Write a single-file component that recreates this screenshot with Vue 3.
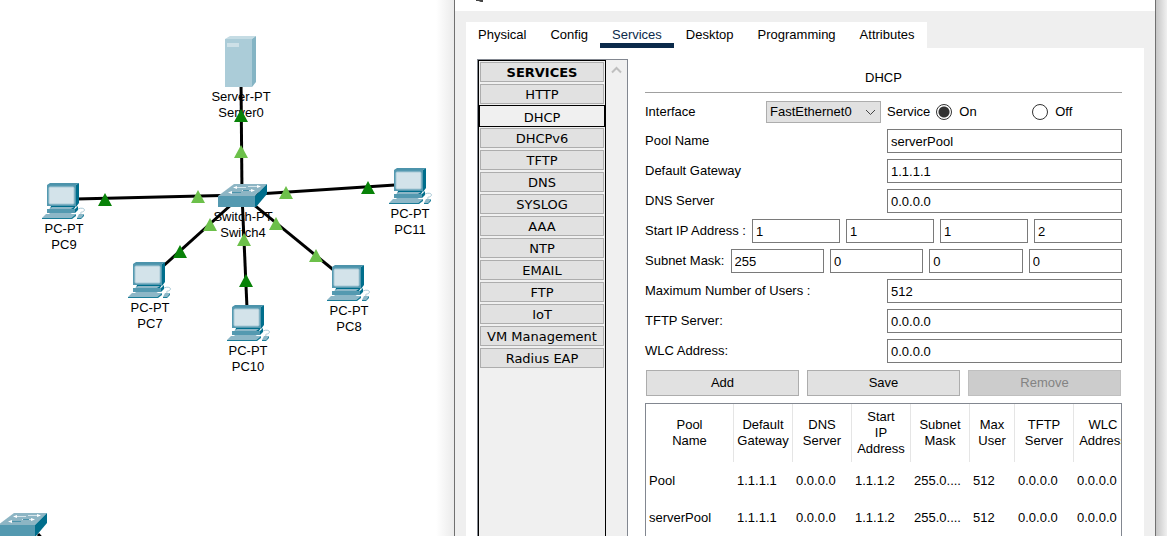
<script setup>
import { ref } from 'vue'

const links = [
  { x1: 241, y1: 80, x2: 242, y2: 195 },
  { x1: 76, y1: 199, x2: 242, y2: 195 },
  { x1: 395, y1: 185, x2: 242, y2: 195 },
  { x1: 160, y1: 269, x2: 242, y2: 195 },
  { x1: 247, y1: 308, x2: 242, y2: 195 },
  { x1: 336, y1: 272, x2: 242, y2: 195 },
  { x1: 38, y1: 534, x2: 52, y2: 550 },
]
const ports = [
  { x: 241, y: 109, up: true }, { x: 241, y: 145 },
  { x: 105, y: 193, up: true }, { x: 198, y: 190 },
  { x: 180, y: 245, up: true }, { x: 210, y: 218 },
  { x: 246, y: 274, up: true }, { x: 244, y: 233 },
  { x: 276, y: 217 }, { x: 316, y: 249 },
  { x: 286, y: 186 }, { x: 368, y: 181, up: true },
]
const devices = [
  { type: 'server', x: 225, y: 36, kind: 'Server-PT', name: 'Server0', lx: 241, ly: 101 },
  { type: 'switch', x: 218, y: 184, kind: 'Switch-PT', name: 'Switch4', lx: 243, ly: 221 },
  { type: 'pc', x: 42, y: 183, kind: 'PC-PT', name: 'PC9', lx: 64, ly: 233 },
  { type: 'pc', x: 128, y: 262, kind: 'PC-PT', name: 'PC7', lx: 150, ly: 312 },
  { type: 'pc', x: 227, y: 305, kind: 'PC-PT', name: 'PC10', lx: 248, ly: 355 },
  { type: 'pc', x: 327, y: 265, kind: 'PC-PT', name: 'PC8', lx: 349, ly: 315 },
  { type: 'pc', x: 389, y: 168, kind: 'PC-PT', name: 'PC11', lx: 410, ly: 218 },
  { type: 'switch', x: -2, y: 513 },
]

const tabs = ['Physical', 'Config', 'Services', 'Desktop', 'Programming', 'Attributes']
const tab = ref('Services')
const services = ['HTTP', 'DHCP', 'DHCPv6', 'TFTP', 'DNS', 'SYSLOG', 'AAA', 'NTP', 'EMAIL', 'FTP', 'IoT', 'VM Management', 'Radius EAP']
const service = ref('DHCP')
const status = ref('on')

const top = [
  { id: 'pool', label: 'Pool Name', value: ref('serverPool') },
  { id: 'gateway', label: 'Default Gateway', value: ref('1.1.1.1') },
  { id: 'dns', label: 'DNS Server', value: ref('0.0.0.0') },
]
const octets = [
  { label: 'Start IP Address :', values: ref(['1', '1', '1', '2']) },
  { label: 'Subnet Mask:', values: ref(['255', '0', '0', '0']) },
]
const bottom = [
  { id: 'users', label: 'Maximum Number of Users :', value: ref('512') },
  { id: 'tftp', label: 'TFTP Server:', value: ref('0.0.0.0') },
  { id: 'wlc', label: 'WLC Address:', value: ref('0.0.0.0') },
]
const columns = ['Pool\nName', 'Default\nGateway', 'DNS\nServer', 'Start\nIP\nAddress', 'Subnet\nMask', 'Max\nUser', 'TFTP\nServer', 'WLC\nAddress']
const rows = [
  ['Pool', '1.1.1.1', '0.0.0.0', '1.1.1.2', '255.0....', '512', '0.0.0.0', '0.0.0.0'],
  ['serverPool', '1.1.1.1', '0.0.0.0', '1.1.1.2', '255.0....', '512', '0.0.0.0', '0.0.0.0'],
]
</script>

<template>
  <div class="desk">
    <section class="workspace" aria-label="Topology">
      <svg class="topology" width="455" height="536">
        <defs>
          <g id="pc">
            <path d="M5 2 8 0H37L34 2Z" fill="#4c93ab" />
            <path d="M34 2 37 0V20L34 24Z" fill="#006e8c" />
            <path d="M5 2H34V23H5Z" fill="#5499b0" />
            <rect x="7" y="4" width="25" height="17" rx="1" fill="#d3e3ea" stroke="#a9c9d6" />
            <path d="M9 23H34L32 26H8Z" fill="#006e8c" />
            <path d="M7 26 10 24H32L29 26Z" fill="#8db7c7" />
            <path d="M5 26H33V30H5Z" fill="#5499b0" />
            <path d="M33 26 36 23V27L33 30Z" fill="#006e8c" />
            <path d="M8 30H30L27 32H6Z" fill="#8db7c7" />
            <path d="M4 31H34L29 35H0Z" fill="#8db7c7" />
            <path d="M0 35H29L34 31V33L30 36H0Z" fill="#1b7d98" />
            <path d="M36 26C40 24 44 26 42 28S38 28 39 31" fill="none" stroke="#a9c9d6" />
            <path d="M37 31H42L39 35H35Z" fill="#8db7c7" />
            <path d="M35 35H39L42 31V33L39 36H35Z" fill="#1b7d98" />
          </g>
          <g id="switch">
            <path d="M0 12 16 0H49L37 12Z" fill="#8db5c4" />
            <path d="M0 12H37V23H0Z" fill="#5499b0" />
            <path d="M37 12 49 0V10L38 23H37Z" fill="#006e8c" />
            <path d="M18 3.500H28M30 2.500H40M14 8.500H15M24 6.500H34" fill="none" stroke="#d5e5eb" />
            <path d="M14 8.500H23M25 6.500H31" fill="none" stroke="#4c93ab" />
            <path d="M19 2 15 3.500 19 5ZM39 1 43 2.500 39 4ZM14 7 10 8.500 14 10ZM33 5 37 6.500 33 8Z" fill="#fff" />
          </g>
          <g id="server">
            <path d="M0 3 5 0H31L27 3Z" fill="#c5dce4" />
            <path d="M27 3 31 0V46L27 51Z" fill="#84b4c4" />
            <path d="M0 3H27V51H0Z" fill="#abccd8" />
            <path d="M2 7H14V11H2Z" fill="#cde0e7" />
          </g>
        </defs>
        <g v-for="d in devices.filter(d => d.name)" :key="d.name" class="label">
          <text :x="d.lx" :y="d.ly">{{ d.kind }}</text>
          <text :x="d.lx" :y="d.ly + 16">{{ d.name }}</text>
        </g>
        <line v-for="(l, i) in links" :key="i" v-bind="l" stroke="#000" stroke-width="3" />
        <use v-for="(d, i) in devices" :key="i" :href="'#' + d.type" :x="d.x" :y="d.y" />
        <path v-for="(p, i) in ports" :key="i" :d="`M${p.x} ${p.y}l7 13h-14z`" :fill="p.up ? '#088208' : '#6cc04a'" />
      </svg>
    </section>

    <main class="window">
      <header class="title">
        <svg width="8" height="3" aria-hidden="true"><path d="M1 0H4L6 1H8" fill="none" stroke="#444" stroke-width="2" /></svg>
      </header>
      <div class="frame">
        <nav class="tabs">
          <button v-for="t in tabs" :key="t" type="button" class="tab" :class="{ active: t === tab }" @click="tab = t">{{ t }}</button>
        </nav>
        <div class="page">
          <aside class="list">
            <div class="items">
              <h2 class="item heading">SERVICES</h2>
              <button v-for="s in services" :key="s" type="button" class="item" :class="{ selected: s === service }" @click="service = s">{{ s }}</button>
            </div>
            <div class="scroll">
              <svg width="11" height="8" viewBox="0 0 11 8"><path d="M1 6.500 5.500 2 10 6.500" fill="none" stroke="#bfbfbf" stroke-width="2" /></svg>
            </div>
          </aside>
          <form class="form" @submit.prevent>
            <h1 class="caption">DHCP</h1>
            <div class="fields">
              <div class="row first">
                <div class="pair">
                  <label for="iface">Interface</label>
                  <span class="picker">
                    <select id="iface"><option>FastEthernet0</option></select>
                    <svg class="arrow" width="11" height="7" viewBox="0 0 11 7"><path d="M1 1 5.500 5.500 10 1" fill="none" stroke="#444" /></svg>
                  </span>
                </div>
                <div class="radios">
                  <span>Service</span>
                  <label><input v-model="status" type="radio" name="status" value="on">On</label>
                  <label><input v-model="status" type="radio" name="status" value="off">Off</label>
                </div>
              </div>
              <div v-for="f in top" :key="f.id" class="row">
                <label :for="f.id">{{ f.label }}</label>
                <input :id="f.id" v-model="f.value.value" type="text">
              </div>
              <div v-for="o in octets" :key="o.label" class="octets">
                <span>{{ o.label }}</span>
                <input v-for="(v, i) in o.values.value" :key="i" v-model="o.values.value[i]" type="text" :aria-label="o.label + ' ' + (i + 1)">
              </div>
              <div v-for="f in bottom" :key="f.id" class="row">
                <label :for="f.id">{{ f.label }}</label>
                <input :id="f.id" v-model="f.value.value" type="text">
              </div>
            </div>
            <div class="actions">
              <button type="button">Add</button>
              <button type="button">Save</button>
              <button type="button" disabled>Remove</button>
            </div>
            <div class="pools">
              <table>
                <colgroup><col v-for="(c, i) in columns" :key="c" :class="{ wide: i === 0, narrow: i === 5 }"></colgroup>
                <thead><tr><th v-for="c in columns" :key="c">{{ c }}</th></tr></thead>
                <tbody>
                  <tr v-for="r in rows" :key="r[0]"><td v-for="(c, i) in r" :key="i">{{ c }}</td></tr>
                </tbody>
              </table>
            </div>
          </form>
        </div>
      </div>
    </main>
    <div class="edge"></div>
  </div>
</template>

<style>
body { margin: 0; }
</style>

<style scoped>
* { box-sizing: border-box; }
.desk {
  display: grid;
  grid-template-columns: minmax(0, 454fr) minmax(0, 702fr) minmax(0, 11fr);
  height: 100vh;
  overflow: hidden;
  background: #fff;
  color: #000;
  font: 13px/16px "Liberation Sans", Arial, sans-serif;
}
button, input, select { margin: 0; font: inherit; color: inherit; border-radius: 0; }
.workspace {
  min-width: 0;
  overflow: hidden;
  background: linear-gradient(to left, #ebebeb, #fff 18px);
}
.topology { display: block; }
.label { text-anchor: middle; font-size: 13px; }
.window {
  min-width: 0;
  min-height: 0;
  display: flex;
  flex-direction: column;
  border: solid #707070;
  border-width: 0 1px;
  background: #efefef;
}
.edge { background: linear-gradient(to right, #c6c6c6, #f0f0f0); }
.title { height: 11px; padding-left: 20px; background: #fff; }
.title svg { display: block; }
.frame { flex: 1; min-height: 0; display: flex; flex-direction: column; align-items: stretch; padding: 11px 11px 0; }
.tabs { display: flex; align-self: flex-start; background: #fff; }
.tab {
  height: 26px;
  padding: 5px 12px 0;
  border: 0;
  border-bottom: 5px solid transparent;
  background: none;
  line-height: 16px;
}
.tab.active { color: #0b2a4a; border-bottom-color: #0b2a4a; }
.page { flex: 1; min-height: 0; display: flex; gap: 17px; padding: 11px 22px 0 11px; background: #fff; }
.list { flex: none; width: 151px; display: flex; border: 1px solid #828790; border-bottom: 0; background: #f0f0f0; }
.items {
  width: 128px;
  display: flex;
  flex-direction: column;
  gap: 2px;
  padding: 1px;
  border: 1px solid #000;
  border-bottom: 0;
  font: 13px/16px "DejaVu Sans", Verdana, sans-serif;
}
.item {
  flex: none;
  height: 20px;
  margin: 0;
  padding: 2px 0 0;
  border: 1px solid #adadad;
  background: #e1e1e1;
  text-align: center;
  white-space: nowrap;
  line-height: 16px;
}
.heading { font-size: 13px; font-weight: bold; }
.selected { height: 22px; margin: -1px; padding-top: 4px; border-color: #000; background: #f0f0f0; }
.scroll { flex: 1; display: flex; justify-content: center; align-items: flex-start; padding-top: 6px; }
.form { flex: 1; min-width: 0; display: flex; flex-direction: column; }
.caption {
  height: 34px;
  margin: 0;
  padding-top: 11px;
  border-bottom: 1px solid #a0a0a0;
  text-align: center;
  font-size: 13px;
  font-weight: normal;
}
.fields { display: grid; grid-template-columns: minmax(0, 1fr); gap: 6px; padding-top: 6px; }
.row { display: grid; grid-template-columns: minmax(0, 236fr) minmax(0, 235fr); gap: 6px; align-items: center; height: 24px; }
.first { padding-top: 2px; }
.pair { display: flex; align-items: center; justify-content: space-between; }
.octets { display: flex; align-items: center; gap: 6px; }
.octets span { white-space: nowrap; }
.octets input { flex: 1 1 0; }
input[type="text"] { width: 100%; height: 24px; min-width: 0; padding: 0 3px; border: 1px solid #7a7a7a; background: #fff; outline: 0; }
.picker { position: relative; width: 115px; }
.picker select { display: block; width: 100%; height: 22px; padding: 0 3px; border: 1px solid #adadad; background: #e1e1e1; appearance: none; }
.arrow { position: absolute; right: 5px; top: 8px; pointer-events: none; }
.radios { display: flex; align-items: center; gap: 6px; }
.radios label { flex: 1 1 0; display: flex; align-items: center; gap: 7px; }
.radios input {
  flex: none;
  width: 16px;
  height: 16px;
  appearance: none;
  border: 1px solid #333;
  border-radius: 50%;
  background: #fff;
}
.radios input:checked { background: radial-gradient(circle, #333 5px, #fff 6px); }
.actions { display: grid; grid-template-columns: repeat(3, 1fr); gap: 8px; padding: 7px 1px; }
.actions button { height: 26px; border: 1px solid #adadad; background: #e1e1e1; }
.actions button:disabled { border-color: #bfbfbf; background: #ccc; color: #838383; }
.pools { flex: 1; min-height: 0; overflow: hidden; border: 1px solid #828790; border-bottom: 0; }
table { width: 487px; table-layout: fixed; border-collapse: separate; border-spacing: 0; }
col { width: 59px; }
col.wide { width: 88px; }
col.narrow { width: 45px; }
th { height: 58px; padding: 0; border-right: 1px solid #e5e5e5; font-weight: normal; white-space: pre; overflow: hidden; }
td { height: 37px; padding: 0 0 0 3px; white-space: nowrap; }
</style>
